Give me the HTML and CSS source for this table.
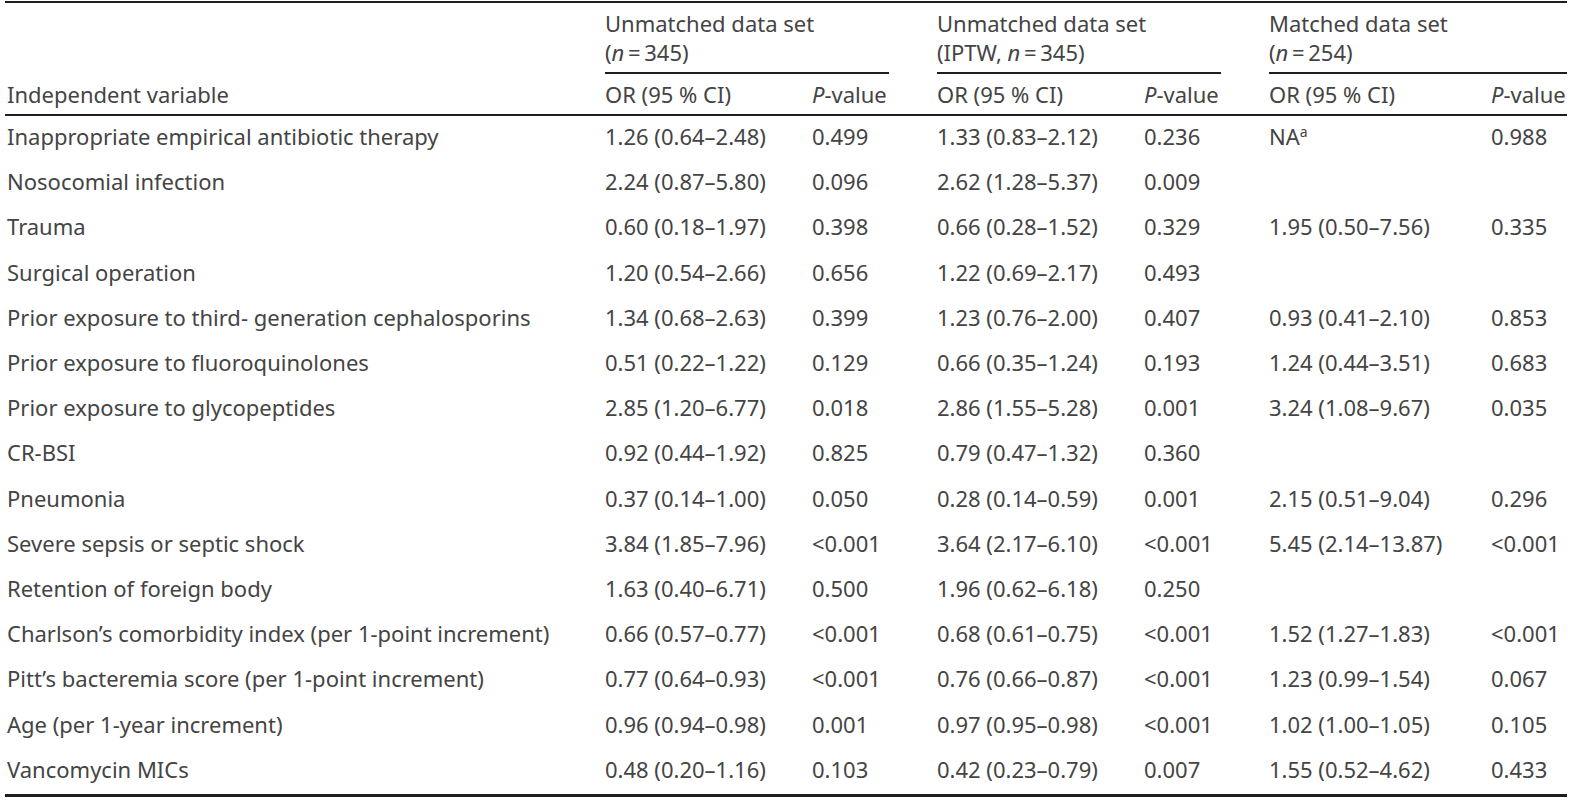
FILE: index.html
```html
<!DOCTYPE html>
<html lang="en">
<head>
<meta charset="utf-8">
<title>Table</title>
<link rel="stylesheet" href="styles.css">
</head>
<body>
<table class="tbl">
  <colgroup>
    <col class="c-var"><col class="c-or"><col class="c-p"><col class="c-or"><col class="c-p"><col class="c-or3"><col class="c-p3">
  </colgroup>
  <thead>
    <tr class="grp-row">
      <th class="blank"></th>
      <th colspan="2" class="grp gap"><div class="grp-in">Unmatched data set<br>(<i>n</i>&#8201;=&#8201;345)</div></th>
      <th colspan="2" class="grp gap"><div class="grp-in">Unmatched data set<br>(IPTW, <i>n</i>&#8201;=&#8201;345)</div></th>
      <th colspan="2" class="grp"><div class="grp-in">Matched data set<br>(<i>n</i>&#8201;=&#8201;254)</div></th>
    </tr>
    <tr class="sub-row">
      <th>Independent variable</th>
      <th>OR (95 % CI)</th>
      <th><i>P</i>-value</th>
      <th>OR (95 % CI)</th>
      <th><i>P</i>-value</th>
      <th>OR (95 % CI)</th>
      <th><i>P</i>-value</th>
    </tr>
  </thead>
  <tbody>
    <tr><td>Inappropriate empirical antibiotic therapy</td><td>1.26 (0.64–2.48)</td><td>0.499</td><td>1.33 (0.83–2.12)</td><td>0.236</td><td>NA<sup>a</sup></td><td>0.988</td></tr>
    <tr><td>Nosocomial infection</td><td>2.24 (0.87–5.80)</td><td>0.096</td><td>2.62 (1.28–5.37)</td><td>0.009</td><td></td><td></td></tr>
    <tr><td>Trauma</td><td>0.60 (0.18–1.97)</td><td>0.398</td><td>0.66 (0.28–1.52)</td><td>0.329</td><td>1.95 (0.50–7.56)</td><td>0.335</td></tr>
    <tr><td>Surgical operation</td><td>1.20 (0.54–2.66)</td><td>0.656</td><td>1.22 (0.69–2.17)</td><td>0.493</td><td></td><td></td></tr>
    <tr><td>Prior exposure to third- generation cephalosporins</td><td>1.34 (0.68–2.63)</td><td>0.399</td><td>1.23 (0.76–2.00)</td><td>0.407</td><td>0.93 (0.41–2.10)</td><td>0.853</td></tr>
    <tr><td>Prior exposure to fluoroquinolones</td><td>0.51 (0.22–1.22)</td><td>0.129</td><td>0.66 (0.35–1.24)</td><td>0.193</td><td>1.24 (0.44–3.51)</td><td>0.683</td></tr>
    <tr><td>Prior exposure to glycopeptides</td><td>2.85 (1.20–6.77)</td><td>0.018</td><td>2.86 (1.55–5.28)</td><td>0.001</td><td>3.24 (1.08–9.67)</td><td>0.035</td></tr>
    <tr><td>CR-BSI</td><td>0.92 (0.44–1.92)</td><td>0.825</td><td>0.79 (0.47–1.32)</td><td>0.360</td><td></td><td></td></tr>
    <tr><td>Pneumonia</td><td>0.37 (0.14–1.00)</td><td>0.050</td><td>0.28 (0.14–0.59)</td><td>0.001</td><td>2.15 (0.51–9.04)</td><td>0.296</td></tr>
    <tr><td>Severe sepsis or septic shock</td><td>3.84 (1.85–7.96)</td><td>&lt;0.001</td><td>3.64 (2.17–6.10)</td><td>&lt;0.001</td><td>5.45 (2.14–13.87)</td><td>&lt;0.001</td></tr>
    <tr><td>Retention of foreign body</td><td>1.63 (0.40–6.71)</td><td>0.500</td><td>1.96 (0.62–6.18)</td><td>0.250</td><td></td><td></td></tr>
    <tr><td>Charlson’s comorbidity index (per 1-point increment)</td><td>0.66 (0.57–0.77)</td><td>&lt;0.001</td><td>0.68 (0.61–0.75)</td><td>&lt;0.001</td><td>1.52 (1.27–1.83)</td><td>&lt;0.001</td></tr>
    <tr><td>Pitt’s bacteremia score (per 1-point increment)</td><td>0.77 (0.64–0.93)</td><td>&lt;0.001</td><td>0.76 (0.66–0.87)</td><td>&lt;0.001</td><td>1.23 (0.99–1.54)</td><td>0.067</td></tr>
    <tr><td>Age (per 1-year increment)</td><td>0.96 (0.94–0.98)</td><td>0.001</td><td>0.97 (0.95–0.98)</td><td>&lt;0.001</td><td>1.02 (1.00–1.05)</td><td>0.105</td></tr>
    <tr><td>Vancomycin MICs</td><td>0.48 (0.20–1.16)</td><td>0.103</td><td>0.42 (0.23–0.79)</td><td>0.007</td><td>1.55 (0.52–4.62)</td><td>0.433</td></tr>
  </tbody>
</table>
</body>
</html>
```
FILE: styles.css
```css
html, body {
  margin: 0;
  padding: 0;
  background: #ffffff;
}
body {
  font-family: "Noto Sans", "Open Sans", sans-serif;
  font-size: 22px;
  color: #444444;
}
.tbl {
  margin: 1px 0 0 5px;
  width: 1560px;
  border-collapse: collapse;
  table-layout: fixed;
  border-top: 2px solid #1e1e1e;
  border-bottom: 3px solid #1e1e1e;
}
.c-var { width: 600px; }
.c-or { width: 207px; }
.c-p { width: 125px; }
.c-or3 { width: 222px; }
.c-p3 { width: 76px; }
th, td {
  padding: 0;
  text-align: left;
  font-weight: normal;
  white-space: nowrap;
}
.grp-row th {
  vertical-align: top;
  padding-top: 6px;
}
.grp.gap { padding-right: 48px; }
.grp-in {
  line-height: 29px;
  padding-bottom: 5px;
  border-bottom: 2px solid #1e1e1e;
}
.sub-row th {
  line-height: 30px;
  padding-top: 5px;
  padding-bottom: 5px;
  border-bottom: 2px solid #1e1e1e;
}
.sub-row th:first-child, tbody td:first-child { padding-left: 2px; }
tbody td {
  height: 40.2px;
  line-height: 30px;
  padding-bottom: 5px;
  vertical-align: middle;
}
sup {
  font-size: 14px;
  line-height: 0;
  vertical-align: 8px;
}
```
